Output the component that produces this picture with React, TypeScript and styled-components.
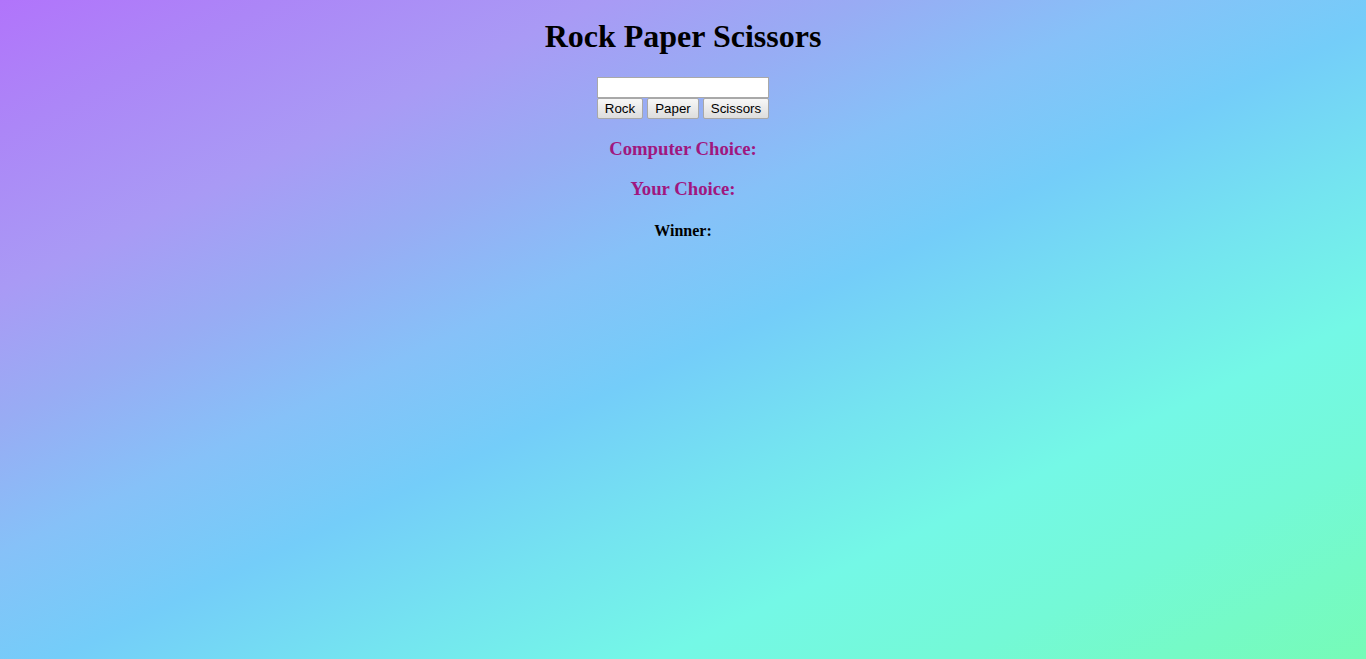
import React from "react";
import styled, { createGlobalStyle } from "styled-components";

const GlobalStyle = createGlobalStyle`
  html, body {
    margin: 0;
    padding: 0;
    min-height: 100%;
  }
  body {
    font-family: "Liberation Serif", "Times New Roman", serif;
    background: linear-gradient(
      to bottom right,
      #b174fb 0%,
      #ac86f7 10%,
      #a99af5 22%,
      #98acf4 32%,
      #86c1f8 42%,
      #74cdf9 52%,
      #74e4f0 63%,
      #74f8e6 74%,
      #74f9d6 85%,
      #76fbb7 100%
    );
    background-attachment: fixed;
    min-height: 659px;
  }
`;

const Page = styled.div`
  display: flex;
  flex-direction: column;
  align-items: center;
  text-align: center;
  padding-top: 18px;
`;

const Title = styled.h1`
  font-size: 32px;
  font-weight: bold;
  color: #000;
  margin: 0 0 22px;
  line-height: 37px;
`;

const Controls = styled.div`
  display: flex;
  flex-direction: column;
  align-items: flex-start;
  width: 172px;
`;

const TextInput = styled.input`
  box-sizing: border-box;
  width: 172px;
  height: 21px;
  margin: 0;
  border: 1px solid #a9a9a9;
  background: #fff;
  font-family: "Liberation Sans", Arial, sans-serif;
  font-size: 13.33px;
  padding: 1px 2px;
  outline: none;
`;

const ButtonRow = styled.div`
  display: flex;
  gap: 4px;
`;

const Button = styled.button<{ $w: number }>`
  box-sizing: border-box;
  width: ${(p) => p.$w}px;
  height: 21px;
  margin: 0;
  padding: 0;
  font-family: "Liberation Sans", Arial, sans-serif;
  font-size: 13.33px;
  color: #000;
  background: linear-gradient(#f7f7f7, #dddddd);
  border: 1px solid #a8a8a8;
  border-radius: 2px;
  cursor: pointer;
`;

const Results = styled.div`
  display: block;
  text-align: center;
`;

const ChoiceHeading = styled.h3`
  font-size: 18.72px;
  font-weight: bold;
  color: #a0177f;
  margin: 18.72px 0;
`;

const WinnerHeading = styled.h4`
  font-size: 16px;
  font-weight: bold;
  color: #000;
  margin: 21.28px 0;
`;

export default function App() {
  return (
    <>
      <GlobalStyle />
      <Page>
        <Title>Rock Paper Scissors</Title>
        <Controls>
          <TextInput type="text" />
          <ButtonRow>
            <Button $w={46}>Rock</Button>
            <Button $w={52}>Paper</Button>
            <Button $w={66}>Scissors</Button>
          </ButtonRow>
        </Controls>
        <Results>
          <ChoiceHeading>Computer Choice:</ChoiceHeading>
          <ChoiceHeading>Your Choice:</ChoiceHeading>
          <WinnerHeading>Winner:</WinnerHeading>
        </Results>
      </Page>
    </>
  );
}
